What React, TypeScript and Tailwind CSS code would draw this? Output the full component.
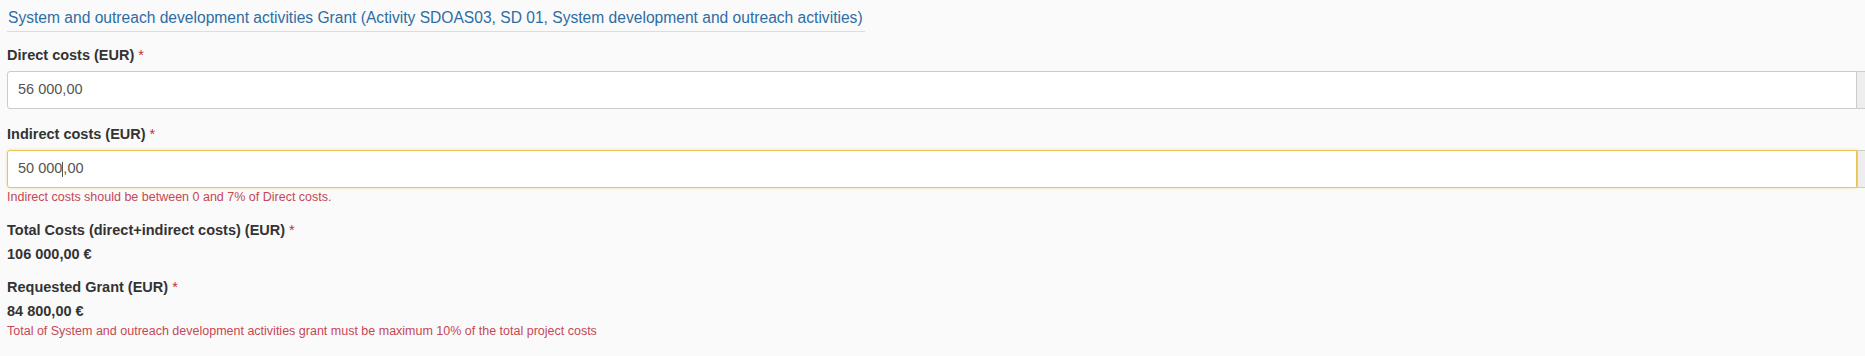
import React from "react";

function Req() {
  return <span className="ml-[4px] text-[#c9302c] font-normal">*</span>;
}

export default function App() {
  return (
    <div
      className="w-[1865px] h-[356px] overflow-hidden bg-[#fafafa] pl-[7px]"
      style={{ fontFamily: '"Liberation Sans", Arial, sans-serif' }}
    >
      <div className="pt-[6px]">
        <div className="inline-block border-b border-[#dddddd] pb-[3px] pl-[1px] pr-[2px] text-[15.6px] leading-[20px] text-[#2e6da4]">
          System and outreach development activities Grant (Activity SDOAS03, SD 01, System development and outreach activities)
        </div>
      </div>

      <div className="mt-[13px] text-[14.5px] leading-[20px] font-bold text-[#333333]">
        Direct costs (EUR)
        <Req />
      </div>
      <div className="mt-[6px] flex h-[38px]">
        <div className="flex flex-1 items-center rounded-l-[3px] border border-[#cccccc] bg-white pl-[10px] text-[14.5px] text-[#555555]">
          56 000,00
        </div>
        <div className="w-[8px] shrink-0 border-y border-[#cccccc] bg-[#eeeeee]" />
      </div>

      <div className="mt-[15px] text-[14.5px] leading-[20px] font-bold text-[#333333]">
        Indirect costs (EUR)
        <Req />
      </div>
      <div className="mt-[6px] flex h-[38px]">
        <div className="flex flex-1 items-center rounded-l-[3px] border border-[#ecc358] bg-white pl-[10px] text-[14.5px] text-[#555555] shadow-[0_0_3px_rgba(240,200,90,0.6)]">
          50 000
          <span className="inline-block h-[15px] w-[1px] bg-[#555555]" />
          ,00
        </div>
        <div className="w-[8px] shrink-0 border-y border-l border-[#cccccc] bg-[#eeeeee]" />
      </div>
      <div className="mt-[1px] text-[12.5px] leading-[17px] text-[#c64755]">
        Indirect costs should be between 0 and 7% of Direct costs.
      </div>

      <div className="mt-[14px] text-[14.5px] leading-[20px] font-bold text-[#333333]">
        Total Costs (direct+indirect costs) (EUR)
        <Req />
      </div>
      <div className="mt-[4px] text-[14.5px] leading-[20px] font-bold text-[#333333]">
        106 000,00 €
      </div>

      <div className="mt-[13px] text-[14.5px] leading-[20px] font-bold text-[#333333]">
        Requested Grant (EUR)
        <Req />
      </div>
      <div className="mt-[4px] text-[14.5px] leading-[20px] font-bold text-[#333333]">
        84 800,00 €
      </div>
      <div className="mt-[2px] text-[12.5px] leading-[16px] text-[#c64755]">
        Total of System and outreach development activities grant must be maximum 10% of the total project costs
      </div>
    </div>
  );
}
